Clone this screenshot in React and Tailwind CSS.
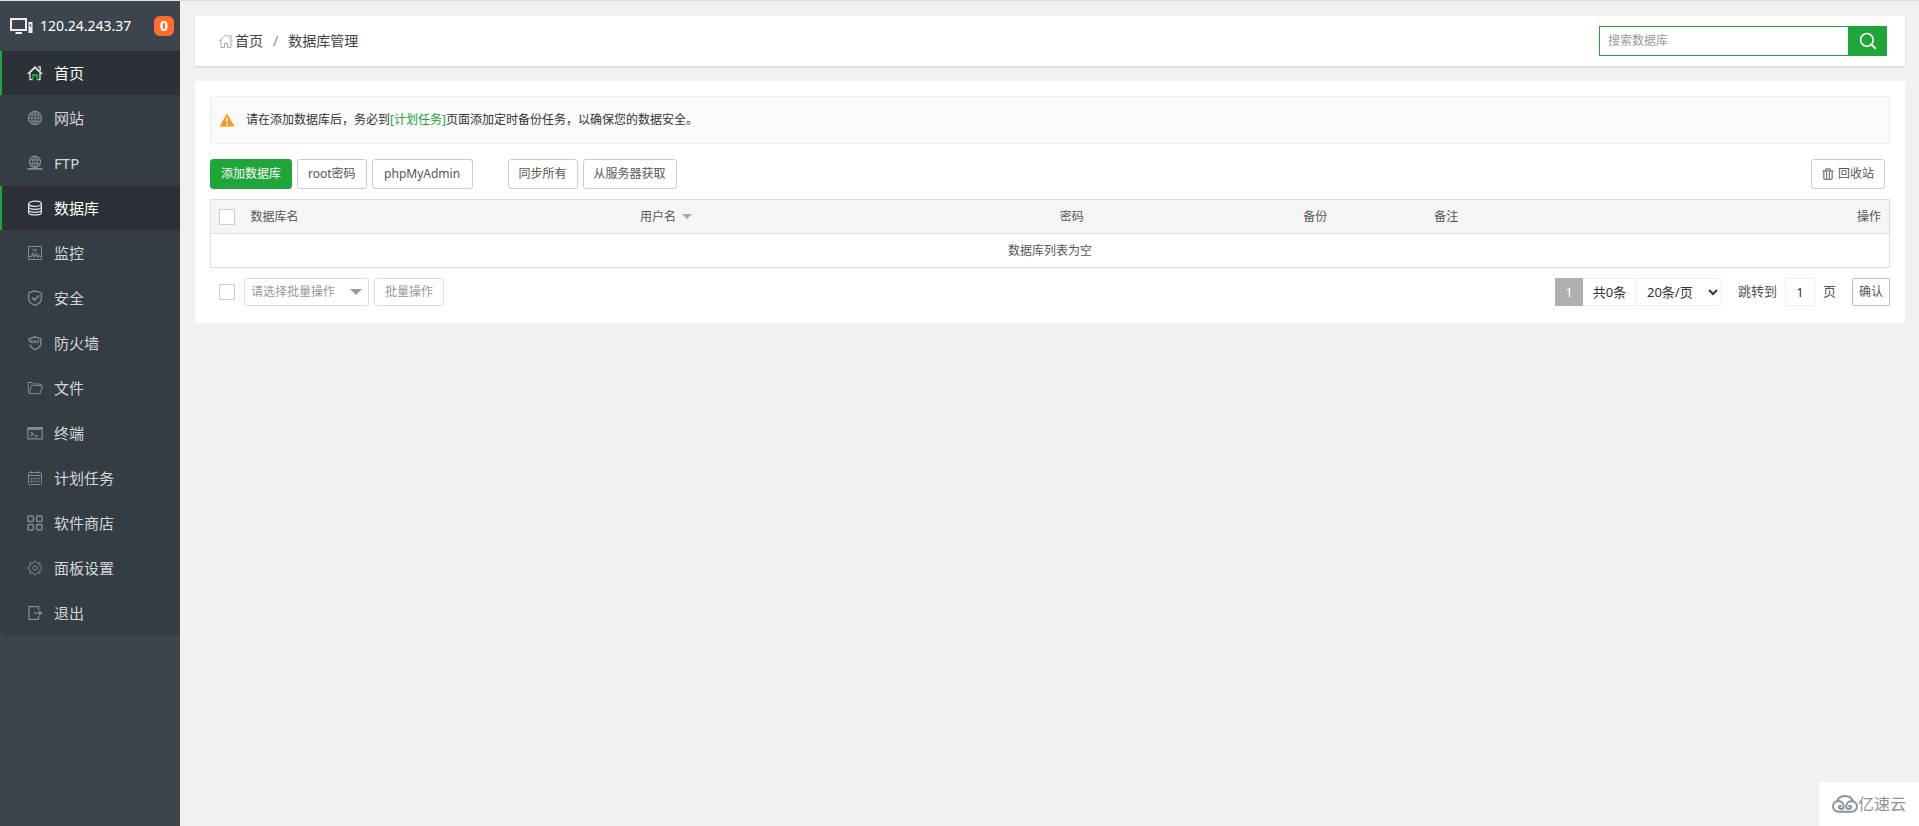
import React, { useState } from 'react';
import clsx from 'clsx';

function Icon({ children, className = 'w-4 h-4' }) {
    return (
        <svg className={className} viewBox="0 0 16 16" fill="none" stroke="currentColor" strokeWidth="1" aria-hidden="true">
            {children}
        </svg>
    );
}

const icons = {
    home: (
        <>
            <path d="M.5 8.500 8 1.200l7.500 7.300-1.400.5L8 3.400 1.900 9z" fill="currentColor" strokeWidth=".5" />
            <path d="M3 8v6.600h2.600M13 8v6.600h-2.600M11 1.800h2.200v4" strokeWidth="1.300" />
            <path d="M6 14.800V10h4v4.800" stroke="#20a53a" strokeWidth="1.800" />
        </>
    ),
    site: (
        <>
            <circle cx="8" cy="8" r="6.600" strokeWidth="1.200" />
            <ellipse cx="8" cy="8" rx="3.200" ry="6.600" />
            <path d="M8 1.400v13.200M1.400 8h13.200M2.400 4.800h11.200M2.400 11.200h11.200" />
        </>
    ),
    ftp: (
        <>
            <circle cx="8" cy="6.800" r="5.600" strokeWidth="1.200" />
            <ellipse cx="8" cy="6.800" rx="2.600" ry="5.600" />
            <path d="M8 1.200v11.200M2.600 5h10.800M2.600 8.600h10.800" />
            <path d="M.4 13.800h15.200M6 13.800h4" strokeWidth="1.800" />
        </>
    ),
    database: (
        <>
            <ellipse cx="8" cy="3.800" rx="6.400" ry="2.600" strokeWidth="1.200" />
            <path d="M1.600 3.800v8.600c0 3.400 12.800 3.400 12.800 0V3.800M1.600 6.800c0 3.400 12.800 3.400 12.800 0M1.600 9.800c0 3.400 12.800 3.400 12.800 0" strokeWidth="1.200" />
        </>
    ),
    control: (
        <>
            <path d="M1.500 1.500h13v13h-13z" />
            <path d="M5.500 4.500h5M6.500 6h3" strokeWidth=".8" />
            <path d="M2 11.500h2.400l1.200-3 1.600 3.600L9 8.500l1.400 3.600 1.200-2 .8 1.400H14" strokeWidth="1.100" />
        </>
    ),
    safe: (
        <>
            <path d="M8 .8 14.400 3v5.400c0 3.400-3 5.600-6.400 7-3.400-1.400-6.400-3.600-6.400-7V3z" strokeWidth="1.300" />
            <path d="m5 7.400 2.600 2.600L12 5.400" strokeWidth="1.600" />
        </>
    ),
    firewall: (
        <>
            <path d="M3 3.400C5 3.200 6.600 2.600 8 1.600c1.800 1.200 3.600 1.700 5.800 1.800v5c0 3-2.400 4.800-5.400 6.200-3-1.200-5-2.800-5.400-5" strokeWidth="1.400" />
            <path d="M1 5.400h2l.6 2.600.8-2.400.8 2.400.8-2.600M7 8.200l1-3 1 3M7.400 7.200h1.400M10.400 8.400V5.600h2M10.400 7h1.600" />
            <path d="M1 3.800h3" strokeWidth="1.400" />
        </>
    ),
    files: (
        <>
            <path d="M2.400 13.600h10.800l2.200-8.200H4.400z" strokeLinejoin="round" />
            <path d="M2.400 13.600 1.300 12V2.500h4.500l1.400 1.500h6.200v1.400" strokeLinejoin="round" />
        </>
    ),
    terminal: (
        <>
            <path d="M.8 2.500h14.400v11.400H.8z" strokeWidth="1.200" />
            <path d="M.8 3.600h14.400" strokeWidth="2.600" />
            <path d="m3.600 7 2.600 1.900-2.600 2M7.400 11h3.400" strokeWidth="1.300" />
        </>
    ),
    crontab: (
        <>
            <rect x="1.500" y="2.500" width="13" height="12" rx="1" />
            <path d="M1.500 5.500h13M4.500 1v2.600M11.500 1v2.600" />
            <path d="M3.500 8.500h9M3.500 11.500h9" strokeWidth="1.500" strokeDasharray="1.500 1" />
        </>
    ),
    soft: (
        <g strokeWidth="1.500">
            <rect x="1" y="1" width="5.400" height="5.400" rx="1" />
            <rect x="9.600" y="1" width="5.400" height="5.400" rx="1" />
            <rect x="1" y="9.600" width="5.400" height="5.400" rx="1" />
            <rect x="9.600" y="9.600" width="5.400" height="5.400" rx="1" />
        </g>
    ),
    config: (
        <>
            <path d="M8 .8 9.800 3.200l3.200-.4-.3 3 2.600 2.200-2.600 2.200.3 3-3.200-.4L8 15.200l-1.800-2.400-3.200.4.300-3L.7 8l2.600-2.200-.3-3 3.200.4z" strokeLinejoin="round" />
            <circle cx="8" cy="8" r="2.300" />
        </>
    ),
    exit: (
        <>
            <path d="M11.500 5V1.600H2v12.800h9.500V11" strokeWidth="1.300" />
            <path d="M7 8h7" strokeWidth="1.200" />
            <path d="m12 5.200 3.600 2.800-3.600 2.800z" fill="currentColor" stroke="none" />
        </>
    ),
};

const menu = [
    { id: 'home', title: '首页' },
    { id: 'site', title: '网站' },
    { id: 'ftp', title: 'FTP' },
    { id: 'database', title: '数据库' },
    { id: 'control', title: '监控' },
    { id: 'safe', title: '安全' },
    { id: 'firewall', title: '防火墙' },
    { id: 'files', title: '文件' },
    { id: 'terminal', title: '终端' },
    { id: 'crontab', title: '计划任务' },
    { id: 'soft', title: '软件商店' },
    { id: 'config', title: '面板设置' },
    { id: 'exit', title: '退出' },
];

const highlighted = ['home', 'database'];

function Sidebar() {
    return (
        <aside className="w-[180px] shrink-0 bg-[#3c444d]">
            <div className="flex h-[50px] items-center pl-2.5 pr-1.5 text-sm text-white">
                <svg className="h-5 w-6" viewBox="0 0 24 20" fill="none" aria-hidden="true">
                    <path d="M1 3h15v11H1z" stroke="#eee" strokeWidth="2" />
                    <path d="M5.500 17h6.500" stroke="#eee" strokeWidth="2" />
                    <path d="M18.500 6h4v11h-4z" fill="#eee" />
                    <path d="M19.500 8h2v3h-2z" fill="#8a9096" />
                </svg>
                <span className="ml-1.5">120.24.243.37</span>
                <button className="ml-auto h-5 w-5 rounded-md bg-[#ff6c2c] font-bold leading-5">0</button>
            </div>
            <nav>
                <ul className="flex flex-col bg-[#353d44]">
                    {menu.map((item) => {
                        const on = highlighted.includes(item.id);
                        return (
                            <li key={item.id} className="not-last:mb-px">
                                <a
                                    href={'#' + item.id}
                                    className={clsx(
                                        'flex h-11 items-center gap-[11px] border-l-2 pl-[25px] text-[15px]',
                                        on ? 'border-[#20a53a] bg-[#2c3138] text-white' : 'border-[#3c3f44] text-[#d3d7d9]'
                                    )}
                                >
                                    <span className={on ? 'text-[#e4e4e4]' : 'text-[#858b90]'}>
                                        <Icon>{icons[item.id]}</Icon>
                                    </span>
                                    {item.title}
                                </a>
                            </li>
                        );
                    })}
                </ul>
            </nav>
        </aside>
    );
}

function Topbar() {
    return (
        <header className="flex h-[50px] items-center justify-between bg-white pl-[23px] pr-[18px] shadow-[0_1px_2px_rgba(0,0,0,0.15)]">
            <nav className="flex items-center text-sm text-[#444]">
                <a href="#home" className="flex items-center gap-px">
                    <span className="text-[#aaa]">
                        <Icon>
                            <path d="M1 8.400 8 1.600l7 6.800M3 7v7.500h3.500v-4h3v4H13V7M11 2.500h2v3.800" />
                        </Icon>
                    </span>
                    首页
                </a>
                <span className="mx-2.5 text-[#888]">/</span>
                <span>数据库管理</span>
            </nav>
            <form className="flex h-[30px]" onSubmit={(e) => e.preventDefault()}>
                <input
                    type="text"
                    aria-label="搜索数据库"
                    placeholder="搜索数据库"
                    className="w-[249px] border border-r-0 border-[#20a53a] px-2 text-xs outline-none placeholder:text-[#999]"
                />
                <button aria-label="搜索" className="flex w-[39px] items-center justify-center bg-[#20a53a] text-white">
                    <Icon className="h-[18px] w-[18px]">
                        <circle cx="7" cy="7" r="5.600" strokeWidth="1.400" />
                        <path d="m11.200 11.200 3.800 3.800" strokeWidth="1.800" />
                    </Icon>
                </button>
            </form>
        </header>
    );
}

function Button({ primary, className, children }) {
    return (
        <button
            className={clsx(
                'flex h-[30px] items-center justify-center rounded-[3px] border px-2.5 text-xs',
                primary ? 'border-[#20a53a] bg-[#20a53a] text-white' : 'border-[#ccc] bg-white text-[#555]',
                className
            )}
        >
            {children}
        </button>
    );
}

function Checkbox({ label, checked, onChange }) {
    return (
        <input
            type="checkbox"
            aria-label={label}
            checked={checked}
            onChange={onChange}
            className="block h-4 w-4 appearance-none border border-[#ccc] bg-white checked:bg-[#20a53a]"
        />
    );
}

function DatabaseTable({ checked, onCheck }) {
    return (
        <table className="w-full table-fixed border border-[#ddd] text-left text-xs text-[#555]">
            <thead>
                <tr className="h-[34px] border-b border-[#ddd] bg-[#f5f5f5] *:px-2 *:font-normal">
                    <th className="w-8">
                        <Checkbox label="全选" checked={checked} onChange={onCheck} />
                    </th>
                    <th className="w-[23.2%]">数据库名</th>
                    <th className="w-[25%]">
                        <button className="flex items-center gap-1.5">
                            用户名
                            <svg className="h-[5px] w-2.5" viewBox="0 0 10 5" fill="#aaa" aria-hidden="true">
                                <path d="M0 0h10L5 5z" />
                            </svg>
                        </button>
                    </th>
                    <th className="w-[14.5%]">密码</th>
                    <th className="w-[7.8%]">备份</th>
                    <th>备注</th>
                    <th className="text-right">操作</th>
                </tr>
            </thead>
            <tbody>
                <tr className="h-[34px]">
                    <td colSpan={7} className="text-center">数据库列表为空</td>
                </tr>
            </tbody>
        </table>
    );
}

function Pagination() {
    return (
        <div className="flex h-7 items-center text-[13px] text-[#333]">
            <span className="h-7 w-7 bg-[#b0b0b0] text-center leading-7 text-white">1</span>
            <span className="h-7 w-[54px] border-y border-r border-[#eee] text-center leading-[26px]">共0条</span>
            <select aria-label="每页条数" className="h-7 w-[85px] rounded-r-sm border border-l-0 border-[#eee] bg-white pl-1.5">
                <option>20条/页</option>
                <option>50条/页</option>
                <option>100条/页</option>
            </select>
            <label htmlFor="page" className="ml-4 text-[#555]">跳转到</label>
            <input id="page" defaultValue="1" className="mx-2 h-7 w-[30px] border border-[#eee] text-center" />
            <span className="text-[#555]">页</span>
            <button className="ml-4 h-7 w-[38px] rounded-xs border border-[#bbb] text-xs text-[#555]">确认</button>
        </div>
    );
}

function CloudBadge() {
    return (
        <div className="fixed bottom-0 right-0 flex h-11 w-[100px] items-center justify-center bg-white text-base text-[#8a929c]">
            <svg className="h-[18px] w-[26px]" viewBox="0 0 26 18" fill="none" stroke="currentColor" strokeWidth="1.900" strokeLinecap="round" aria-hidden="true">
                <path d="M5 6.500C6 3 9 1 13 1s7 2 8 5.500" />
                <path d="M13 16.800H6.500A5.400 5.400 0 1 1 11.800 11.500c0 3.400-5.200 3.200-5 .4.200-1.300 1.800-1.400 2.200-.5" />
                <path d="M13 16.800h6.500A5.400 5.400 0 1 0 14.200 11.500c0 3.400 5.200 3.200 5 .4-.2-1.300-1.800-1.400-2.200-.5" />
            </svg>
            亿速云
        </div>
    );
}

function App() {
    const [checked, setChecked] = useState(false);
    const toggle = () => setChecked(!checked);

    return (
        <div
            lang="zh-CN"
            className="flex min-h-screen border-t border-[#ddd] bg-[#f1f1f1] font-['Noto_Sans','Noto_Sans_CJK_SC',sans-serif]"
        >
            <Sidebar />
            <main className="min-w-0 flex-1 py-[15px] pl-[15px] pr-3.5">
                <Topbar />
                <section className="mt-[15px] bg-white px-[15px] pb-[17px] pt-[15px]">
                    <div className="flex h-12 items-center gap-[11px] border border-[#eee] bg-[#fafafa] pl-2 text-xs text-[#333]">
                        <svg className="h-3.5 w-4" viewBox="0 0 16 14" aria-hidden="true">
                            <path d="M8 .5 15.500 13.500H.5z" fill="#f39c1f" />
                            <path d="M8 5v4M8 10.300v1.700" stroke="#fff" strokeWidth="1.600" />
                        </svg>
                        <p>
                            请在添加数据库后，务必到
                            <a href="#crontab" className="text-[#20a53a]">[计划任务]</a>
                            页面添加定时备份任务，以确保您的数据安全。
                        </p>
                    </div>

                    <div className="mb-2.5 mt-[15px] flex gap-[5px] pr-[5px]">
                        <Button primary>添加数据库</Button>
                        <Button>root密码</Button>
                        <Button className="min-w-[101px]">phpMyAdmin</Button>
                        <Button className="ml-[30px]">同步所有</Button>
                        <Button>从服务器获取</Button>
                        <Button className="ml-auto gap-1">
                            <Icon className="h-3.5 w-3">
                                <path d="M.5 4h15M5 4V1.200h6V4M2.500 4v11h11V4M6.200 5v9.500M9.800 5v9.500" strokeWidth="1.300" />
                            </Icon>
                            回收站
                        </Button>
                    </div>

                    <DatabaseTable checked={checked} onCheck={toggle} />

                    <div className="mt-2.5 flex items-center justify-between">
                        <div className="flex items-center pl-[9px] text-xs text-[#999]">
                            <Checkbox label="选择全部数据库" checked={checked} onChange={toggle} />
                            <div className="relative ml-[9px]">
                                <select aria-label="批量操作" className="h-7 w-[125px] appearance-none rounded-xs border border-[#ddd] bg-white px-1.5">
                                    <option>请选择批量操作</option>
                                    <option>删除数据库</option>
                                </select>
                                <svg className="pointer-events-none absolute right-[7px] top-[11px] h-1.5 w-3" viewBox="0 0 12 6" fill="#999" aria-hidden="true">
                                    <path d="M0 0h12L6 6z" />
                                </svg>
                            </div>
                            <button className="ml-[5px] h-7 rounded-[3px] border border-[#ddd] px-2.5">批量操作</button>
                        </div>
                        <Pagination />
                    </div>
                </section>
            </main>
            <CloudBadge />
        </div>
    );
}

export default App;
